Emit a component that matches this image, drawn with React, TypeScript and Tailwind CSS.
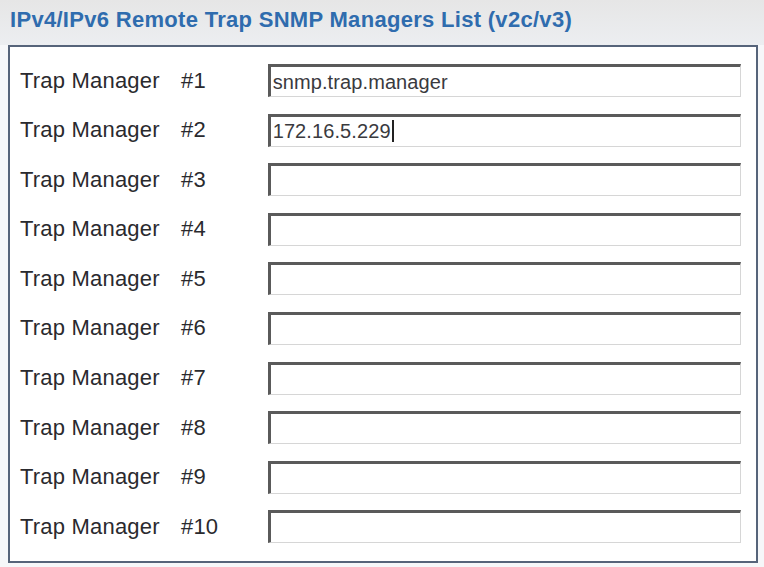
import React from "react";

const rows = [
  { n: 1, v: "snmp.trap.manager" },
  { n: 2, v: "172.16.5.229", cursor: true },
  { n: 3, v: "" },
  { n: 4, v: "" },
  { n: 5, v: "" },
  { n: 6, v: "" },
  { n: 7, v: "" },
  { n: 8, v: "" },
  { n: 9, v: "" },
  { n: 10, v: "" },
];

export default function App() {
  return (
    <div
      className="w-[764px] h-[567px] bg-[#f6f7f9] overflow-hidden"
      style={{ fontFamily: '"Liberation Sans", Arial, sans-serif' }}
    >
      <div className="h-[45px] bg-gradient-to-b from-[#e6e6e6] to-[#eceef1] pl-[10px] pt-[8px]">
        <div className="text-[22px] font-bold text-[#2f6cae] leading-[24px] tracking-[0.3px]">
          IPv4/IPv6 Remote Trap SNMP Managers List (v2c/v3)
        </div>
      </div>
      <div className="ml-[8px] w-[750px] h-[518px] border-2 border-[#56647a] bg-white pl-[10px] pr-[15px] pt-[17px] flex flex-col gap-[16.6px]">
        {rows.map((r) => (
          <div key={r.n} className="flex items-center h-[33px]">
            <div className="w-[248px] flex text-[22px] text-[#2a2a2e] leading-none tracking-[0.2px]">
              <span className="w-[161px]">Trap Manager</span>
              <span>#{r.n}</span>
            </div>
            <div className="w-[474px] h-[33px] bg-white border-t-[3px] border-l-[3px] border-r border-b border-t-[#5a5a5a] border-l-[#5a5a5a] border-r-[#d6d6d6] border-b-[#d6d6d6] flex items-center pl-[2px]">
              <span className="text-[20px] text-[#3a3a3e] leading-none tracking-[0.1px]">{r.v}</span>
              {r.cursor && <span className="w-[2px] h-[22px] bg-[#222] ml-[1px]" />}
            </div>
          </div>
        ))}
      </div>
    </div>
  );
}
